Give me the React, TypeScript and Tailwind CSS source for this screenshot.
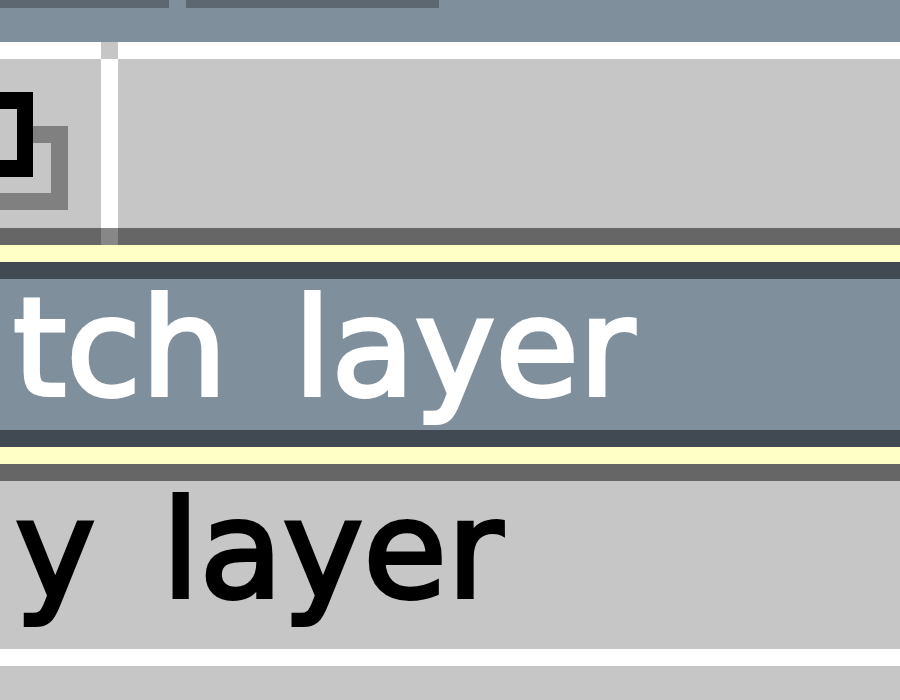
import React from "react";

const SLATE = "bg-[#7f909c]";
const FONT = { fontFamily: '"DejaVu Sans", "Noto Sans", sans-serif' };

function CopyIcon() {
  return (
    <svg width="101" height="169" viewBox="0 0 101 169" className="block">
      {/* back square */}
      <rect x="-40" y="67" width="108" height="84" fill="#808080" />
      <rect x="-40" y="84" width="91" height="50" fill="#c6c6c6" />
      {/* front square */}
      <rect x="-40" y="33" width="73" height="85" fill="#000000" />
      <rect x="-40" y="50" width="57" height="51" fill="#c6c6c6" />
    </svg>
  );
}

export default function App() {
  return (
    <div className="w-[900px] h-[700px] overflow-hidden bg-[#c6c6c6] flex flex-col">
      {/* title strip */}
      <div className={`h-[42px] shrink-0 ${SLATE}`}>
        <div className="flex h-[8px]">
          <div className="w-[169px] bg-[#5d6771]" />
          <div className="w-[17px]" />
          <div className="w-[253px] bg-[#5d6771]" />
        </div>
      </div>

      {/* toolbar top edge */}
      <div className="h-[17px] shrink-0 flex bg-white">
        <div className="w-[101px]" />
        <div className="w-[17px] bg-[#c6c6c6]" />
      </div>

      {/* toolbar */}
      <div className="h-[169px] shrink-0 flex bg-[#c6c6c6]">
        <div className="w-[101px]">
          <CopyIcon />
        </div>
        <div className="w-[17px] bg-white" />
        <div className="flex-1" />
      </div>
      <div className="h-[17px] shrink-0 flex bg-[#666666]">
        <div className="w-[101px]" />
        <div className="w-[17px] bg-[#878787]" />
      </div>

      {/* selected item */}
      <div className="h-[17px] shrink-0 bg-[#ffffc6]" />
      <div className="h-[17px] shrink-0 bg-[#414a52]" />
      <div
        className={`h-[151px] shrink-0 ${SLATE} whitespace-pre pl-[13px] text-white text-[136px] leading-[138px] [word-spacing:23px] [-webkit-text-stroke:4px_white]`}
        style={FONT}
      >
        tch layer
      </div>
      <div className="h-[17px] shrink-0 bg-[#414a52]" />
      <div className="h-[17px] shrink-0 bg-[#ffffc6]" />

      {/* next item */}
      <div className="h-[17px] shrink-0 bg-[#666666]" />
      <div
        className="h-[168px] shrink-0 bg-[#c6c6c6] whitespace-pre pl-[15px] text-black text-[136px] leading-[138px] [word-spacing:23px] [-webkit-text-stroke:4px_black]"
        style={FONT}
      >
        y layer
      </div>
      <div className="h-[17px] shrink-0 bg-white" />
      <div className="flex-1 bg-[#c6c6c6]" />
    </div>
  );
}
